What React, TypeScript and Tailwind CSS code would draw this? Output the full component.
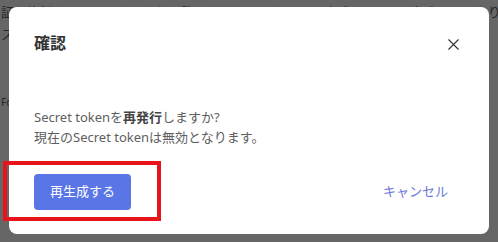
import { X } from 'lucide-react';

const font = { fontFamily: '"Noto Sans", "Noto Sans CJK JP", sans-serif' };

export default function App() {
  return (
    <div className="relative w-[498px] h-[242px] overflow-hidden bg-[#666666]" style={font}>
      {/* page behind the overlay */}
      <div className="absolute inset-0 text-[13px] leading-[22px] text-[#262626]">
        <p className="whitespace-nowrap pl-[1px] pt-[1px]">
          証を複製します。これにより、許可されたシークレット方式はIP/CIDR方式のみとなりま
        </p>
        <p className="whitespace-nowrap pl-[1px]">ス</p>
        <p className="whitespace-nowrap pl-[1px] mt-[46px] text-[10px]">Fo</p>
      </div>

      <div className="absolute left-[9px] top-[7px] w-[480px] h-[227px] rounded-[8px] bg-white flex flex-col">
        <div className="flex items-center justify-between pl-[25px] pr-[26px] pt-[24px]">
          <h2 className="text-[16px] leading-[24px] font-bold text-[#333333]">確認</h2>
          <button className="text-[#333333] mt-[2px]" aria-label="閉じる">
            <X size={19} strokeWidth={1.4} />
          </button>
        </div>

        <div className="pl-[25px] pt-[52px] text-[13px] leading-[20px] text-[#5e5e5e]">
          <p>
            Secret tokenを<span className="font-bold text-[#444444]">再発行</span>しますか?
          </p>
          <p>現在のSecret tokenは無効となります。</p>
        </div>

        <div className="flex items-center justify-between pl-[25px] pr-[41px] mt-[27px]">
          <button className="w-[97px] h-[36px] rounded-[4px] bg-[#5a76e6] text-white text-[13px]">
            再生成する
          </button>
          <button className="text-[13px] text-[#6a78d8]">キャンセル</button>
        </div>
      </div>

      {/* red highlight annotation */}
      <div className="absolute left-[3px] top-[161px] w-[158px] h-[60px] border-[4px] border-[#e8141b]" />
    </div>
  );
}
